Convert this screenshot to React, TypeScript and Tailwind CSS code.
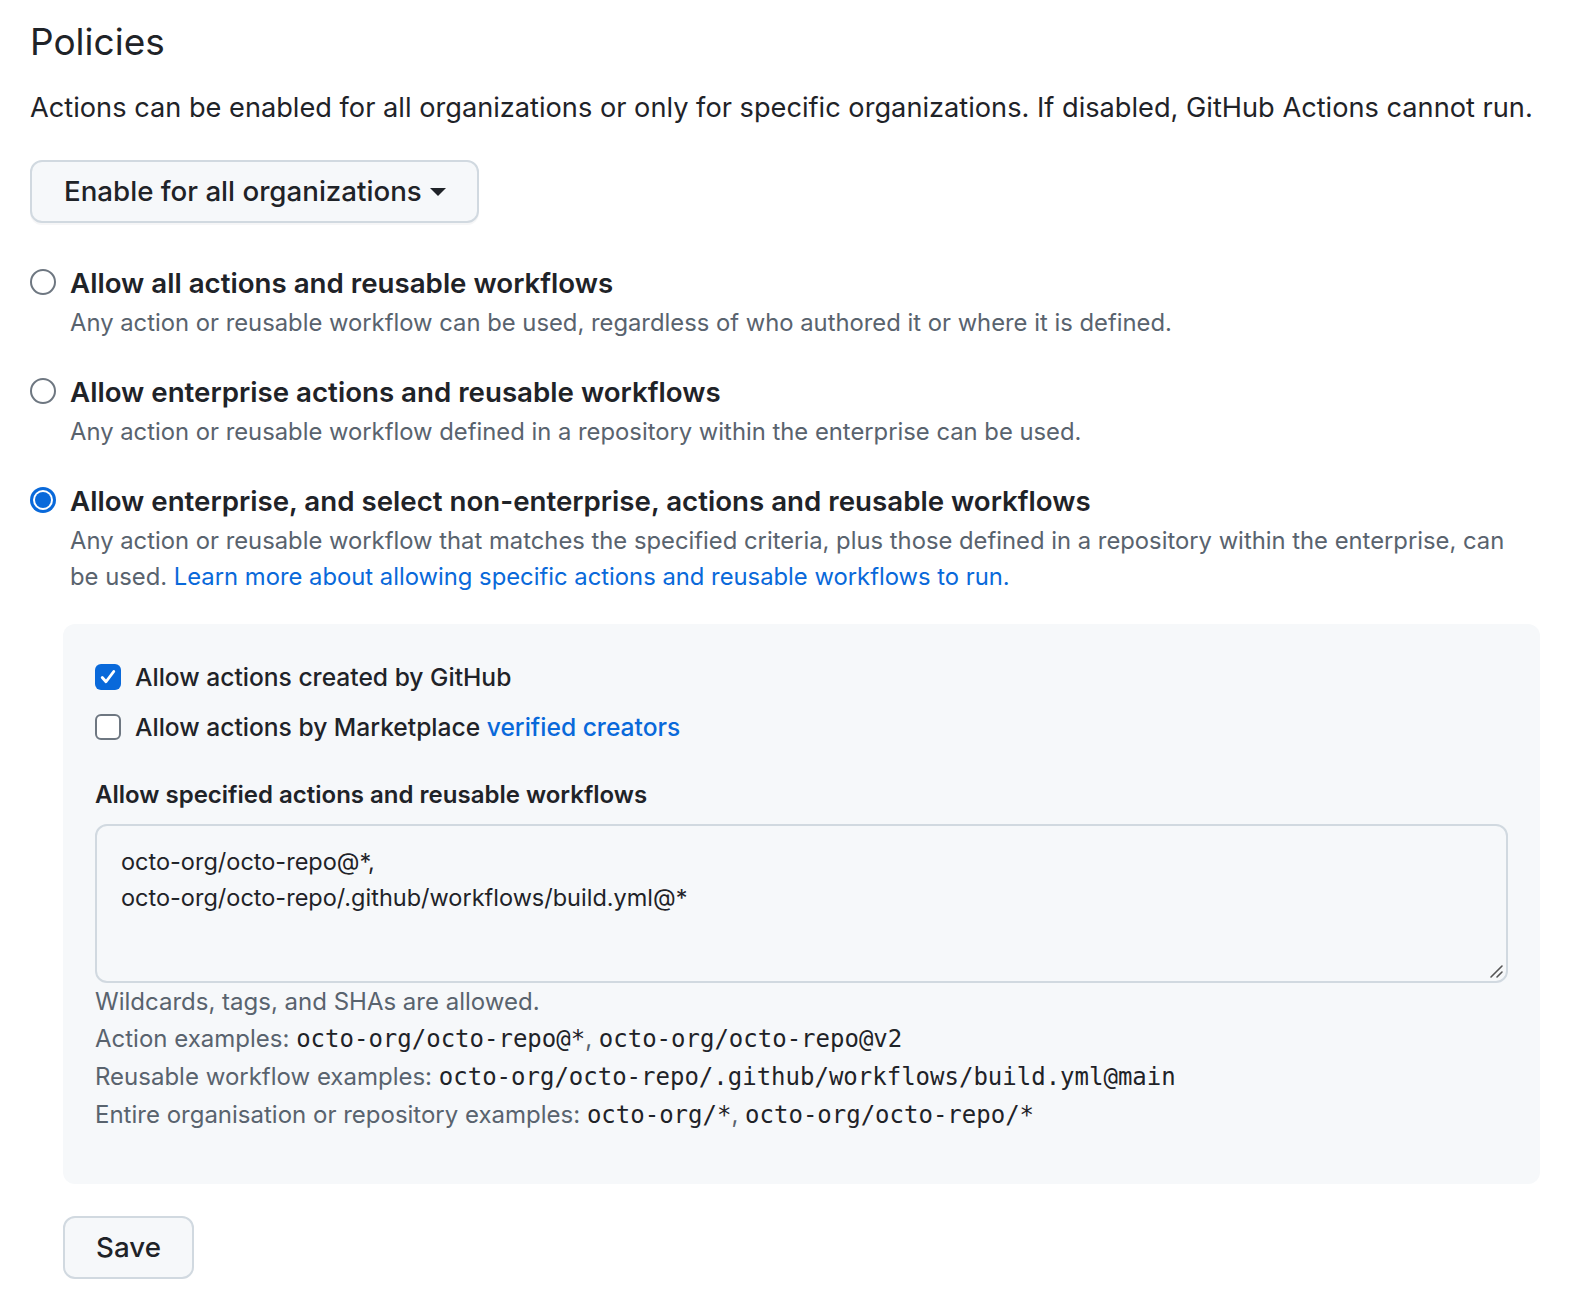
import React from "react";

const sans = { fontFamily: "Inter, 'Noto Sans', sans-serif" };

function Radio({ checked }: { checked?: boolean }) {
  if (checked) {
    return (
      <span className="mt-[2px] flex h-[26px] w-[26px] shrink-0 items-center justify-center rounded-full bg-[#0969da]">
        <span className="flex h-[20px] w-[20px] items-center justify-center rounded-full bg-white">
          <span className="h-[16px] w-[16px] rounded-full bg-[#0969da]" />
        </span>
      </span>
    );
  }
  return <span className="mt-[2px] h-[26px] w-[26px] shrink-0 rounded-full border-[2px] border-[#6e7781] bg-white" />;
}

function Checkbox({ checked }: { checked?: boolean }) {
  if (checked) {
    return (
      <span className="flex h-[26px] w-[26px] shrink-0 items-center justify-center rounded-[6px] bg-[#0969da]">
        <svg width="20" height="20" viewBox="0 0 16 16" fill="none">
          <path d="M3.4 8.4l3 3.4L12.6 3.6" stroke="white" strokeWidth="2.3" strokeLinecap="round" strokeLinejoin="round" />
        </svg>
      </span>
    );
  }
  return <span className="h-[26px] w-[26px] shrink-0 rounded-[6px] border-[2px] border-[#6e7781] bg-white" />;
}

function Option({ checked, title, children }: { checked?: boolean; title: string; children: React.ReactNode }) {
  return (
    <div className="flex gap-[14px]">
      <Radio checked={checked} />
      <div className="flex flex-col">
        <div className="text-[27.7px] font-semibold leading-[32px] text-[#1f2328]">{title}</div>
        <div className="mt-[6px] max-w-[1445px] text-[23.8px] leading-[36px] text-[#59636e]">{children}</div>
      </div>
    </div>
  );
}

export default function App() {
  const mono = { fontFamily: "'DejaVu Sans Mono', 'Liberation Mono', monospace" };
  return (
    <div className="min-h-[1308px] w-[1582px] bg-white pl-[30px] pr-[30px] pt-[18px] text-[#1f2328]" style={sans}>
      <h2 className="text-[37px] font-normal leading-[48px]">Policies</h2>
      <p className="mt-[24px] text-[27.2px] leading-[36px]">
        Actions can be enabled for all organizations or only for specific organizations. If disabled, GitHub Actions cannot run.
      </p>
      <button className="mt-[34px] flex h-[63px] w-[449px] items-center rounded-[12px] border-[2px] border-[#d1d9e0] bg-[#f6f8fa] pl-[32px] text-[27.7px] font-medium text-[#1f2328] shadow-[0_2px_0_rgba(31,35,40,0.04)]">
        Enable for all organizations
        <svg className="ml-[8px]" width="16" height="10" viewBox="0 0 16 10">
          <path d="M0 1h16L8 9z" fill="#1f2328" />
        </svg>
      </button>

      <div className="mt-[44px] flex flex-col gap-[35px]">
        <Option title="Allow all actions and reusable workflows">
          Any action or reusable workflow can be used, regardless of who authored it or where it is defined.
        </Option>
        <Option title="Allow enterprise actions and reusable workflows">
          Any action or reusable workflow defined in a repository within the enterprise can be used.
        </Option>
        <Option checked title="Allow enterprise, and select non-enterprise, actions and reusable workflows">
          Any action or reusable workflow that matches the specified criteria, plus those defined in a repository within the enterprise, can be used.{" "}
          <a className="text-[#0969da]">Learn more about allowing specific actions and reusable workflows to run.</a>
        </Option>
      </div>

      <div className="ml-[33px] mt-[29px] w-[1477px] rounded-[12px] bg-[#f6f8fa] px-[32px] pb-[50px] pt-[40px]">
        <div className="flex flex-col gap-[24px]">
          <label className="flex items-center gap-[14px] text-[24.6px] font-medium leading-[26px]">
            <Checkbox checked />
            Allow actions created by GitHub
          </label>
          <label className="flex items-center gap-[14px] text-[24.6px] font-medium leading-[26px]">
            <Checkbox />
            <span>
              Allow actions by Marketplace <a className="text-[#0969da]">verified creators</a>
            </span>
          </label>
        </div>
        <div className="mt-[40px] text-[24px] font-semibold leading-[30px]">Allow specified actions and reusable workflows</div>
        <div className="relative mt-[14px] h-[159px] w-[1413px] rounded-[12px] border-[2px] border-[#d1d9e0] bg-[#f6f8fa] px-[24px] pt-[18px] text-[23.5px] leading-[36px] text-[#1f2328]">
          <div>octo-org/octo-repo@*,</div>
          <div>octo-org/octo-repo/.github/workflows/build.yml@*</div>
          <svg className="absolute bottom-[2px] right-[2px]" width="16" height="16" viewBox="0 0 16 16">
            <path d="M14 3L3 14M14 9L9 14" stroke="#555" strokeWidth="1.6" strokeLinecap="round" />
          </svg>
        </div>
        <div className="mt-0 text-[24px] leading-[37px] text-[#59636e]">
          <div>Wildcards, tags, and SHAs are allowed.</div>
          <div>
            Action examples: <span className="text-[#1f2328]" style={mono}>octo-org/octo-repo@*</span>,{" "}
            <span className="text-[#1f2328]" style={mono}>octo-org/octo-repo@v2</span>
          </div>
          <div>
            Reusable workflow examples:{" "}
            <span className="text-[#1f2328]" style={mono}>octo-org/octo-repo/.github/workflows/build.yml@main</span>
          </div>
          <div>
            Entire organisation or repository examples: <span className="text-[#1f2328]" style={mono}>octo-org/*</span>,{" "}
            <span className="text-[#1f2328]" style={mono}>octo-org/octo-repo/*</span>
          </div>
        </div>
      </div>

      <button className="ml-[33px] mt-[32px] flex h-[63px] w-[131px] items-center justify-center rounded-[12px] border-[2px] border-[#d1d9e0] bg-[#f6f8fa] text-[27.7px] font-medium text-[#1f2328]">
        Save
      </button>
    </div>
  );
}
